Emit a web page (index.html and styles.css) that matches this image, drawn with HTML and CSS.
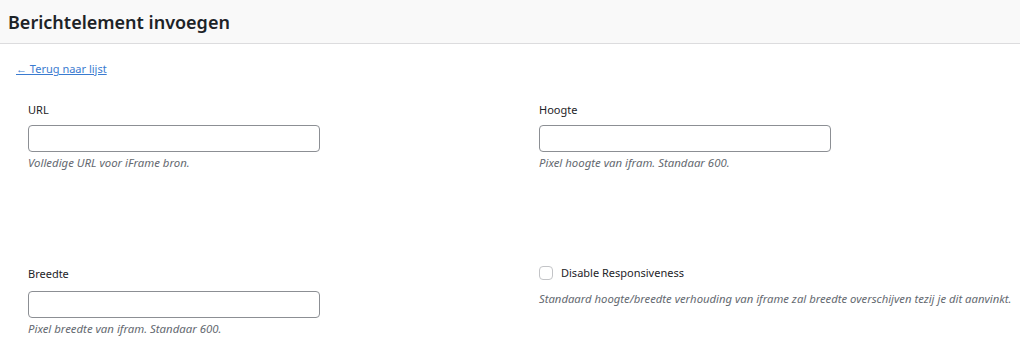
FILE: index.html
```html
<!DOCTYPE html>
<html lang="nl">
<head>
<meta charset="utf-8">
<title>Berichtelement invoegen</title>
<link rel="stylesheet" href="styles.css">
</head>
<body>
<header class="topbar">
  <h1 class="title">Berichtelement invoegen</h1>
</header>
<main class="content">
  <a class="back" href="#">← Terug naar lijst</a>
  <form class="grid">
    <div class="field">
      <label class="label" for="url">URL</label>
      <input class="input" id="url" type="text">
      <p class="help">Volledige URL voor iFrame bron.</p>
    </div>
    <div class="field">
      <label class="label" for="hoogte">Hoogte</label>
      <input class="input" id="hoogte" type="text">
      <p class="help">Pixel hoogte van ifram. Standaar 600.</p>
    </div>
    <div class="field">
      <label class="label label-wide" for="breedte">Breedte</label>
      <input class="input" id="breedte" type="text">
      <p class="help">Pixel breedte van ifram. Standaar 600.</p>
    </div>
    <div class="field field-check">
      <label class="check">
        <span class="box"></span>
        <span>Disable Responsiveness</span>
      </label>
      <p class="help help-check">Standaard hoogte/breedte verhouding van iframe zal breedte overschijven tezij je dit aanvinkt.</p>
    </div>
  </form>
</main>
</body>
</html>
```
FILE: styles.css
```css
* { box-sizing: border-box; }
html, body { margin: 0; padding: 0; background: #fff; }
body {
  font-family: "Noto Sans", "Open Sans", sans-serif;
  color: #1d2327;
  font-size: 12px;
}
.topbar {
  height: 44px;
  background: #f9f9f9;
  border-bottom: 1px solid #dcdcde;
  display: flex;
  align-items: center;
  padding: 0 8px;
}
.title {
  margin: 0;
  font-size: 18px;
  font-weight: 600;
  color: #1d2327;
}
.content {
  padding: 17px 16px 0 16px;
}
.back {
  display: block;
  font-size: 11px;
  line-height: 16px;
  color: #3a7bd0;
  text-decoration: underline;
  width: max-content;
}
.grid {
  display: grid;
  grid-template-columns: 511px 1fr;
  row-gap: 95px;
  margin: 25px 0 0 12px;
}
.field { display: flex; flex-direction: column; align-items: flex-start; }
.field-check { margin-top: -1px; }
.label {
  font-size: 11px;
  line-height: 16px;
  color: #1d2327;
  margin-bottom: 7px;
}
.label-wide { margin-bottom: 9px; }
.input {
  width: 292px;
  height: 27px;
  border: 1px solid #8c8f94;
  border-radius: 4px;
  background: #fff;
  margin: 0;
  padding: 0 8px;
}
.help {
  margin: 3px 0 0 0;
  font-size: 11.4px;
  line-height: 16px;
  font-style: italic;
  color: #646970;
  white-space: nowrap;
}
.check {
  display: flex;
  align-items: center;
  gap: 8px;
  font-size: 11px;
  line-height: 16px;
  color: #1d2327;
}
.box {
  width: 14px;
  height: 14px;
  border: 1px solid #c3c4c7;
  border-radius: 4px;
  background: #fff;
}
.help-check { margin-top: 10px; font-size: 11.3px; }
```
